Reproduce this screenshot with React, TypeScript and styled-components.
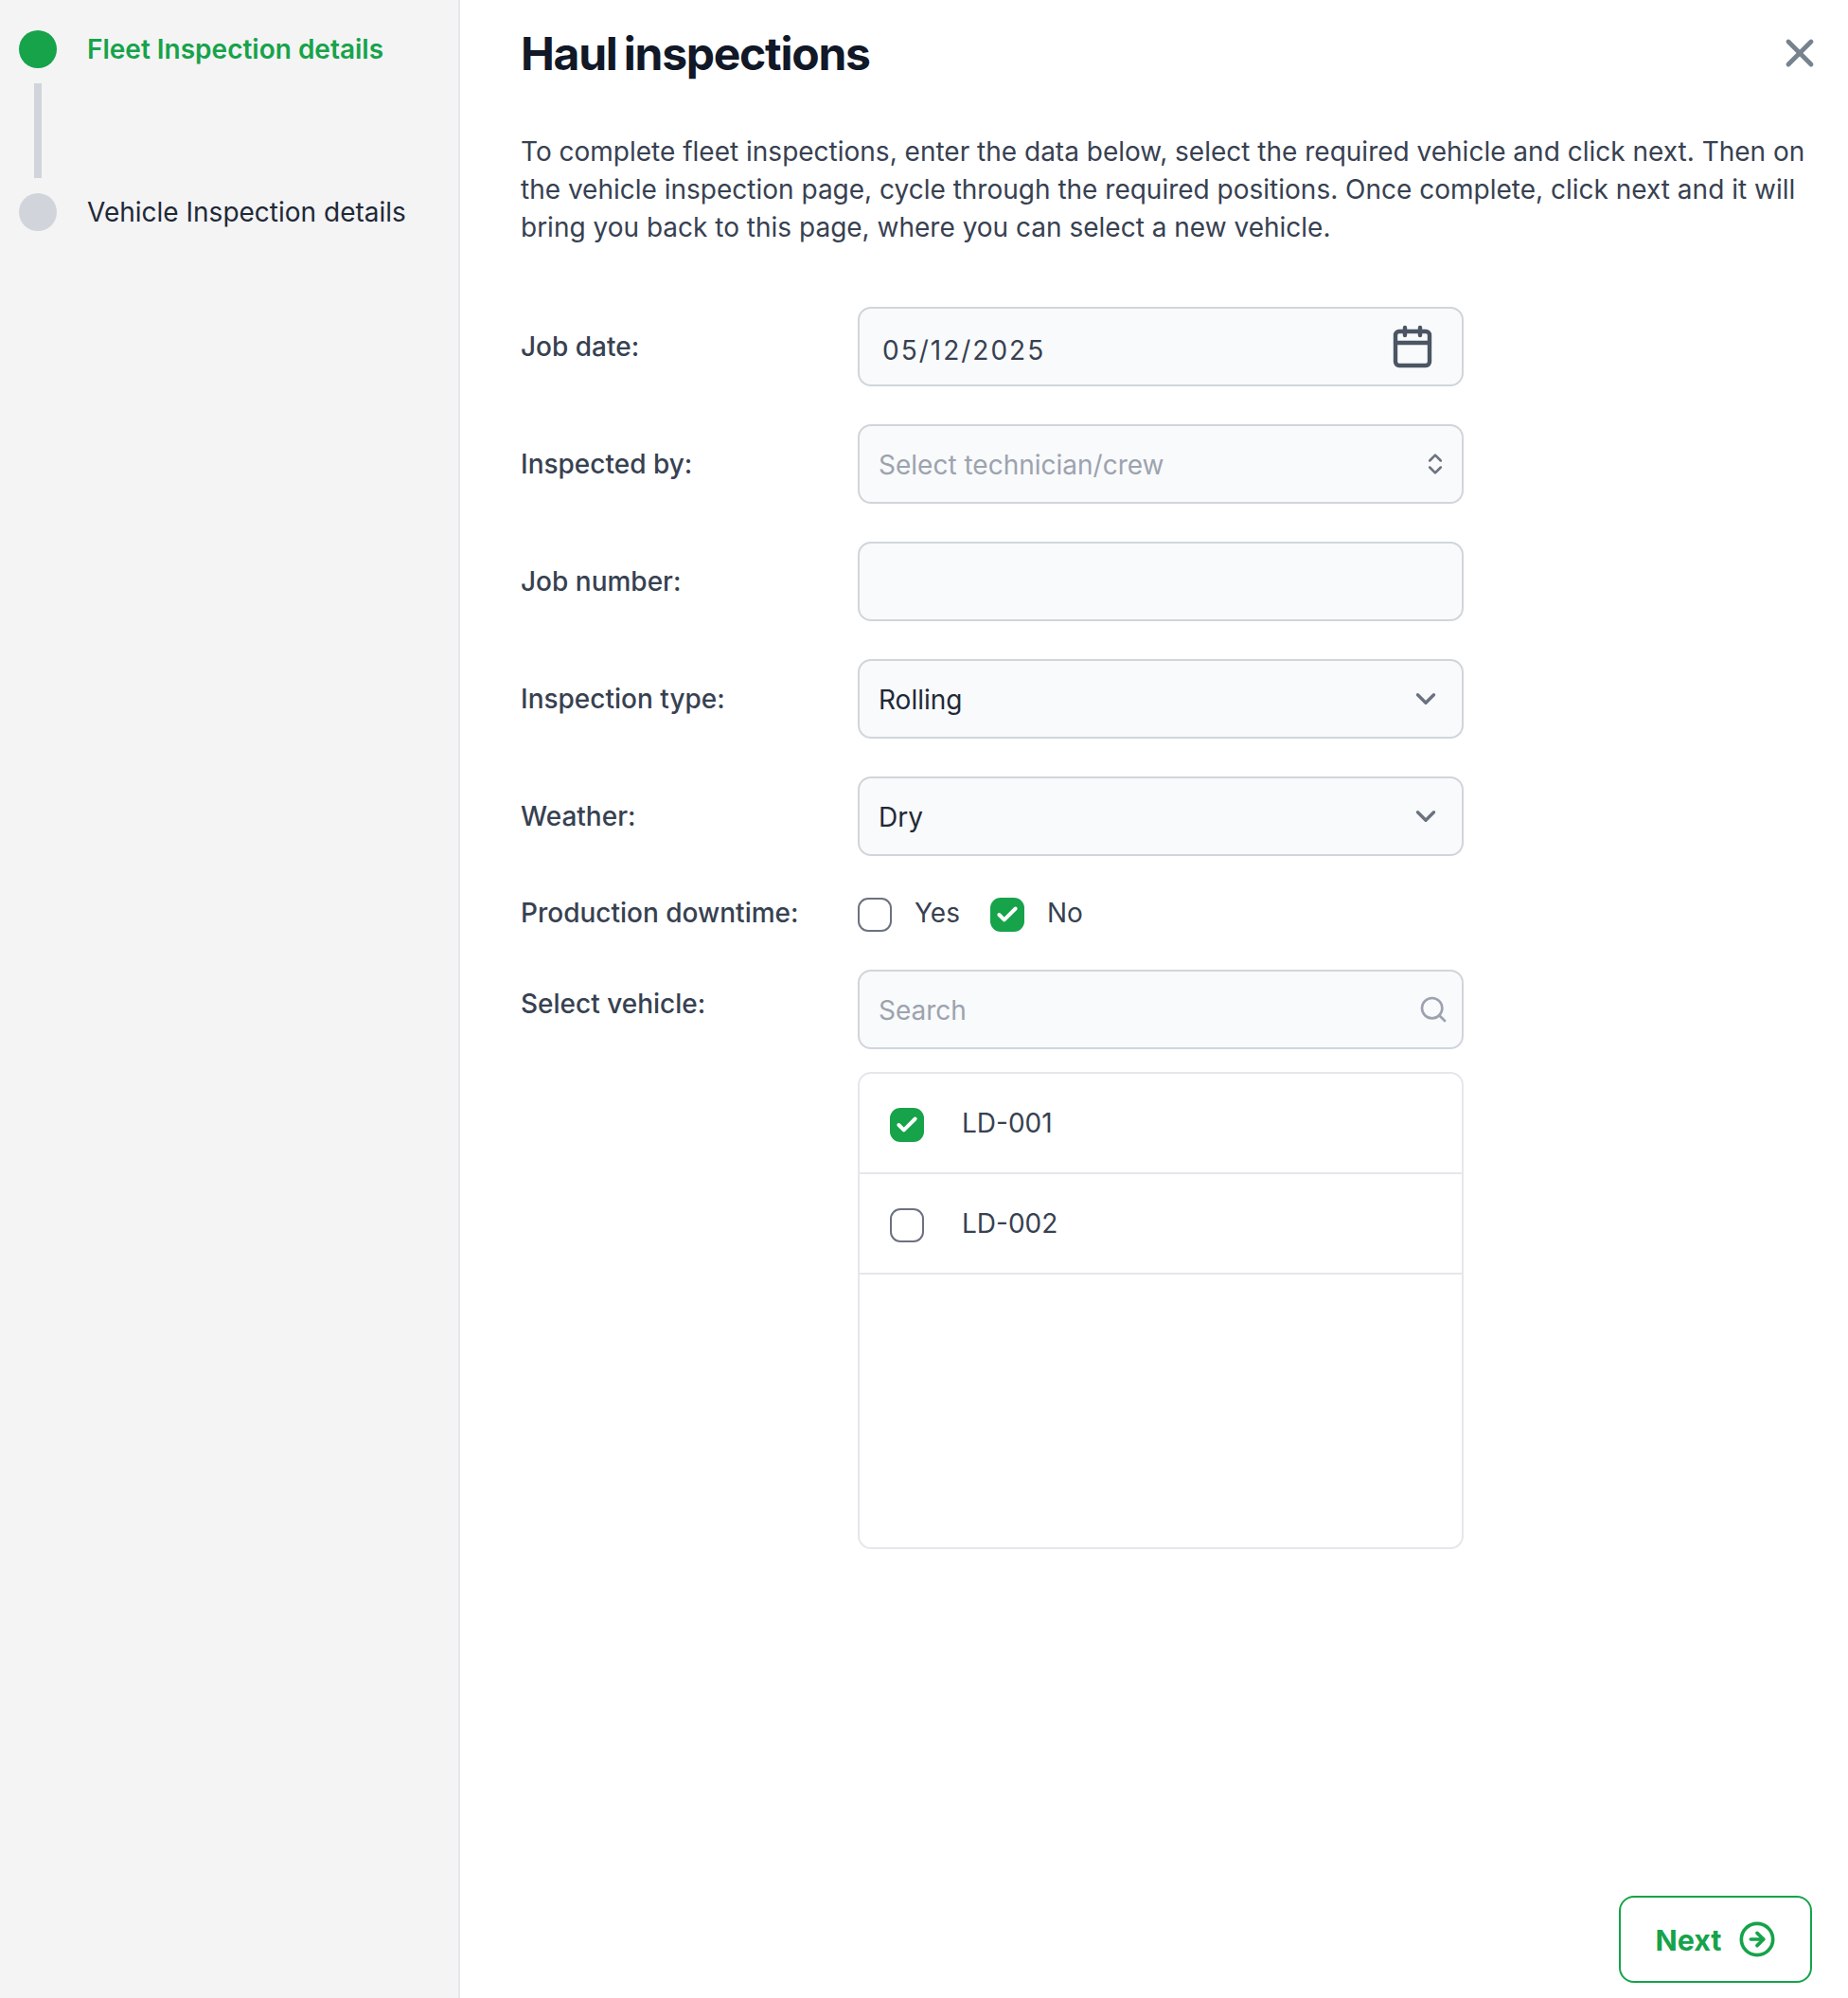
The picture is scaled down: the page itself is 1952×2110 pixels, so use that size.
import { createGlobalStyle, styled } from 'styled-components';
import {
  Calendar,
  Check,
  ChevronDown,
  ChevronsUpDown,
  CircleArrowRight,
  Search,
  X,
} from 'lucide-react';

const GlobalStyle = createGlobalStyle`
  * { box-sizing: border-box; }
  html, body { margin: 0; padding: 0; }
  body {
    background: #fff;
    font-family: Inter, "Liberation Sans", sans-serif;
    color: #111827;
  }
`;

const Page = styled.div`
  display: flex;
  height: 2110px;
  overflow: hidden;
`;

const Sidebar = styled.aside`
  width: 486px;
  flex-shrink: 0;
  background: #f4f4f5;
  border-right: 2px solid #e5e7eb;
  padding: 32px 20px;
  display: flex;
  flex-direction: column;
`;

const Step = styled.div`
  display: flex;
  align-items: center;
  gap: 32px;
`;

const Dot = styled.span<{ $active?: boolean }>`
  width: 40px;
  height: 40px;
  border-radius: 50%;
  background: ${(p) => (p.$active ? '#16a34a' : '#d1d5db')};
`;

const StepLabel = styled.span<{ $active?: boolean }>`
  font-size: 28px;
  font-weight: ${(p) => (p.$active ? 600 : 400)};
  color: ${(p) => (p.$active ? '#16a34a' : '#1f2937')};
`;

const Connector = styled.div`
  width: 8px;
  height: 100px;
  margin: 16px 0 16px 16px;
  background: #d1d5db;
`;

const Main = styled.main`
  flex: 1;
  min-width: 0;
  padding: 24px 38px 16px 64px;
  display: flex;
  flex-direction: column;
`;

const TitleRow = styled.div`
  display: flex;
  align-items: center;
  justify-content: space-between;
  height: 64px;
`;

const Title = styled.h1`
  margin: 0;
  font-size: 48px;
  font-weight: 700;
  letter-spacing: -1.25px;
  word-spacing: -3px;
  color: #111827;
`;

const CloseButton = styled.button`
  display: flex;
  border: 0;
  padding: 0;
  background: none;
  color: #76838f;
  margin-right: -11px;
`;

const Intro = styled.p`
  margin: 52px 0 64px;
  font-size: 28px;
  line-height: 40px;
  color: #374151;
`;

const Form = styled.div`
  display: flex;
  flex-direction: column;
  gap: 40px;
`;

const Row = styled.div<{ $top?: boolean }>`
  display: grid;
  grid-template-columns: 356px 640px;
  align-items: ${(p) => (p.$top ? 'start' : 'center')};
`;

const Label = styled.label<{ $top?: boolean }>`
  font-size: 28px;
  font-weight: 500;
  color: #374151;
  padding-top: ${(p) => (p.$top ? '19px' : '0')};
`;

const Field = styled.div<{ $left?: number; $right?: number }>`
  height: 84px;
  display: flex;
  align-items: center;
  justify-content: space-between;
  padding: 0 ${(p) => p.$right ?? 20}px 0 ${(p) => p.$left ?? 20}px;
  background: #f9fafb;
  border: 2px solid #d1d5db;
  border-radius: 14px;
  font-size: 28px;
  color: #1f2937;
`;

const FieldText = styled.span`
  padding-top: 2px;
`;

const Placeholder = styled(FieldText)`
  color: #9ca3af;
`;

const DateText = styled.span`
  letter-spacing: 2px;
  padding-top: 8px;
  color: #374151;
`;

const CheckRow = styled.div`
  display: flex;
  align-items: center;
  height: 40px;
`;

const Box = styled.span<{ $checked?: boolean }>`
  width: 36px;
  height: 36px;
  flex-shrink: 0;
  margin-top: 4px;
  display: flex;
  align-items: center;
  justify-content: center;
  border-radius: 11px;
  color: #fff;
  background: ${(p) => (p.$checked ? '#16a34a' : '#fff')};
  border: ${(p) => (p.$checked ? '0' : '2.5px solid #6b7280')};
`;

const CheckText = styled.span`
  margin: 0 32px 0 24px;
  font-size: 28px;
  color: #374151;
`;

const VehicleColumn = styled.div`
  display: flex;
  flex-direction: column;
  gap: 24px;
`;

const VehicleList = styled.div`
  height: 504px;
  border: 2px solid #e5e7eb;
  border-radius: 14px;
`;

const VehicleRow = styled.div`
  height: 106px;
  display: flex;
  align-items: center;
  gap: 40px;
  padding-left: 32px;
  border-bottom: 2px solid #e5e7eb;
  font-size: 28px;
  color: #374151;
`;

const Footer = styled.div`
  margin-top: auto;
  display: flex;
  justify-content: flex-end;
`;

const NextButton = styled.button`
  width: 204px;
  height: 92px;
  display: flex;
  align-items: center;
  justify-content: center;
  gap: 17px;
  background: #fff;
  border: 2.67px solid #16a34a;
  border-radius: 16px;
  color: #16a34a;
  font-family: inherit;
  font-size: 30.5px;
  font-weight: 700;
`;

const Tick = () => <Check size={26} strokeWidth={3.6} />;

const App = () => {
  return (
    <>
      <GlobalStyle />
      <Page>
        <Sidebar>
          <Step>
            <Dot $active />
            <StepLabel $active>Fleet Inspection details</StepLabel>
          </Step>
          <Connector />
          <Step>
            <Dot />
            <StepLabel>Vehicle Inspection details</StepLabel>
          </Step>
        </Sidebar>
        <Main>
          <TitleRow>
            <Title>Haul inspections</Title>
            <CloseButton>
              <X size={48} strokeWidth={2.4} />
            </CloseButton>
          </TitleRow>
          <Intro>
            To complete fleet inspections, enter the data below, select the required vehicle and
            click next. Then on the vehicle inspection page, cycle through the required positions.
            Once complete, click next and it will bring you back to this page, where you can select
            a new vehicle.
          </Intro>
          <Form>
            <Row>
              <Label>Job date:</Label>
              <Field $left={24} $right={28}>
                <DateText>05/12/2025</DateText>
                <Calendar size={48} strokeWidth={2.2} color="#4b5563" />
              </Field>
            </Row>
            <Row>
              <Label>Inspected by:</Label>
              <Field $right={14}>
                <Placeholder>Select technician/crew</Placeholder>
                <ChevronsUpDown size={28} strokeWidth={2.2} color="#6b7280" />
              </Field>
            </Row>
            <Row>
              <Label>Job number:</Label>
              <Field />
            </Row>
            <Row>
              <Label>Inspection type:</Label>
              <Field $right={21}>
                <FieldText>Rolling</FieldText>
                <ChevronDown size={34} strokeWidth={2.4} color="#6b7280" />
              </Field>
            </Row>
            <Row>
              <Label>Weather:</Label>
              <Field $right={21}>
                <FieldText>Dry</FieldText>
                <ChevronDown size={34} strokeWidth={2.4} color="#6b7280" />
              </Field>
            </Row>
            <Row>
              <Label>Production downtime:</Label>
              <CheckRow>
                <Box />
                <CheckText>Yes</CheckText>
                <Box $checked>
                  <Tick />
                </Box>
                <CheckText>No</CheckText>
              </CheckRow>
            </Row>
            <Row $top>
              <Label $top>Select vehicle:</Label>
              <VehicleColumn>
                <Field $right={14}>
                  <Placeholder>Search</Placeholder>
                  <Search size={32} strokeWidth={2} color="#9ca3af" />
                </Field>
                <VehicleList>
                  <VehicleRow>
                    <Box $checked>
                      <Tick />
                    </Box>
                    LD-001
                  </VehicleRow>
                  <VehicleRow>
                    <Box />
                    LD-002
                  </VehicleRow>
                </VehicleList>
              </VehicleColumn>
            </Row>
          </Form>
          <Footer>
            <NextButton>
              Next
              <CircleArrowRight size={40} strokeWidth={2.2} />
            </NextButton>
          </Footer>
        </Main>
      </Page>
    </>
  );
};

export default App;
